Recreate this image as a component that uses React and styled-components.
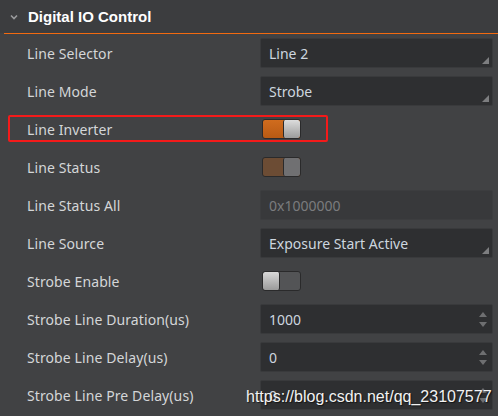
import React from "react";
import styled, { createGlobalStyle } from "styled-components";

const Global = createGlobalStyle`
  html, body { margin: 0; padding: 0; background: #414244; }
  body { font-family: "Noto Sans", "Open Sans", sans-serif; }
`;

const Panel = styled.div`
  position: relative;
  width: 498px;
  height: 416px;
  overflow: hidden;
  background: #414244;
`;

const Header = styled.div`
  height: 33px;
  background: #3c3d3f;
  display: flex;
  align-items: center;
  padding-left: 10px;
  gap: 10px;
  box-sizing: border-box;
`;

const HeaderLine = styled.div`
  margin-left: 4px;
  height: 1px;
  background: #f26a10;
`;

const Title = styled.span`
  color: #ffffff;
  font-family: "Liberation Sans", Arial, sans-serif;
  font-weight: 700;
  font-size: 15px;
`;

const Rows = styled.div`
  display: flex;
  flex-direction: column;
`;

const Row = styled.div`
  height: 38px;
  display: grid;
  grid-template-columns: 260px 233px;
  align-items: center;
`;

const Label = styled.span`
  padding-left: 27px;
  color: #d4d6d8;
  font-size: 14px;
  letter-spacing: 0.1px;
`;

const Box = styled.div`
  position: relative;
  height: 30px;
  box-sizing: border-box;
  background: ${(p) => (p.$disabled ? "#38393b" : "#2e2f31")};
  border: 1px solid ${(p) => (p.$disabled ? "#3c3d3f" : "#393a3c")};
  border-radius: 2px;
  display: flex;
  align-items: center;
  padding-left: 8px;
  color: ${(p) => (p.$disabled ? "#7b7c7e" : "#cdd6df")};
  font-size: 14px;
`;

const Corner = styled.svg`
  position: absolute;
  right: 3px;
  bottom: 3px;
`;

const Spin = styled.svg`
  position: absolute;
  right: 4px;
  top: 6px;
`;

const Toggle = styled.div`
  margin-left: 2px;
  width: 39px;
  height: 20px;
  box-sizing: border-box;
  border: 1px solid #2a2a2b;
  border-radius: 3px;
  display: flex;
  flex-direction: ${(p) => (p.$on ? "row" : "row-reverse")};
  overflow: hidden;
  background: ${(p) => p.$track};
`;

const TrackFill = styled.div`
  flex: 1;
`;

const Knob = styled.div`
  width: 17px;
  height: 100%;
  box-sizing: border-box;
  border-left: ${(p) => (p.$on ? "1px solid #2a2a2b" : "none")};
  border-right: ${(p) => (p.$on ? "none" : "1px solid #2a2a2b")};
  background: ${(p) => p.$knob};
  border-radius: 2px;
`;

const Highlight = styled.div`
  position: absolute;
  left: 8px;
  top: 115px;
  width: 320px;
  height: 27px;
  box-sizing: border-box;
  border: 2px solid #f41a1a;
  border-radius: 2px;
  pointer-events: none;
`;

const Watermark = styled.div`
  position: absolute;
  left: 246px;
  top: 388px;
  font-family: "Liberation Sans", Arial, sans-serif;
  font-size: 16px;
  color: #f2f2f2;
  text-shadow: 1px 1px 1px rgba(0, 0, 0, 0.6);
  white-space: nowrap;
`;

const Chevron = () => (
  <svg width="8" height="6" viewBox="0 0 8 6">
    <path d="M1 1.5 L4 4.5 L7 1.5" stroke="#9a9b9d" strokeWidth="1.6" fill="none" />
  </svg>
);

const Select = ({ value }) => (
  <Box>
    {value}
    <Corner width="7" height="7" viewBox="0 0 7 7">
      <path d="M7 0 L7 7 L0 7 Z" fill="#7d7e80" />
    </Corner>
  </Box>
);

const Number = ({ value }) => (
  <Box>
    {value}
    <Spin width="10" height="18" viewBox="0 0 10 18">
      <path d="M1 6 L5 1 L9 6 Z" fill="#6e6f71" />
      <path d="M1 11 L5 16 L9 11 Z" fill="#6e6f71" />
    </Spin>
  </Box>
);

const Switch = ({ on, track, knob }) => (
  <Toggle $on={on} $track={track}>
    <TrackFill />
    <Knob $on={on} $knob={knob} />
  </Toggle>
);

export default function App() {
  return (
    <>
      <Global />
      <Panel>
        <Header>
          <Chevron />
          <Title>Digital IO Control</Title>
        </Header>
        <HeaderLine />
        <Rows>
          <Row>
            <Label>Line Selector</Label>
            <Select value="Line 2" />
          </Row>
          <Row>
            <Label>Line Mode</Label>
            <Select value="Strobe" />
          </Row>
          <Row>
            <Label>Line Inverter</Label>
            <Switch on track="linear-gradient(#d06c1e, #b85a14)" knob="linear-gradient(#dcdcdc, #9c9c9c)" />
          </Row>
          <Row>
            <Label>Line Status</Label>
            <Switch on track="#6c4c34" knob="#707072" />
          </Row>
          <Row>
            <Label>Line Status All</Label>
            <Box $disabled>0x1000000</Box>
          </Row>
          <Row>
            <Label>Line Source</Label>
            <Select value="Exposure Start Active" />
          </Row>
          <Row>
            <Label>Strobe Enable</Label>
            <Switch on={false} track="#535456" knob="linear-gradient(#d8d8d8, #9a9a9a)" />
          </Row>
          <Row>
            <Label>Strobe Line Duration(us)</Label>
            <Number value="1000" />
          </Row>
          <Row>
            <Label>Strobe Line Delay(us)</Label>
            <Number value="0" />
          </Row>
          <Row>
            <Label>Strobe Line Pre Delay(us)</Label>
            <Number value="0" />
          </Row>
        </Rows>
        <Highlight />
        <Watermark>https://blog.csdn.net/qq_23107577</Watermark>
      </Panel>
    </>
  );
}
